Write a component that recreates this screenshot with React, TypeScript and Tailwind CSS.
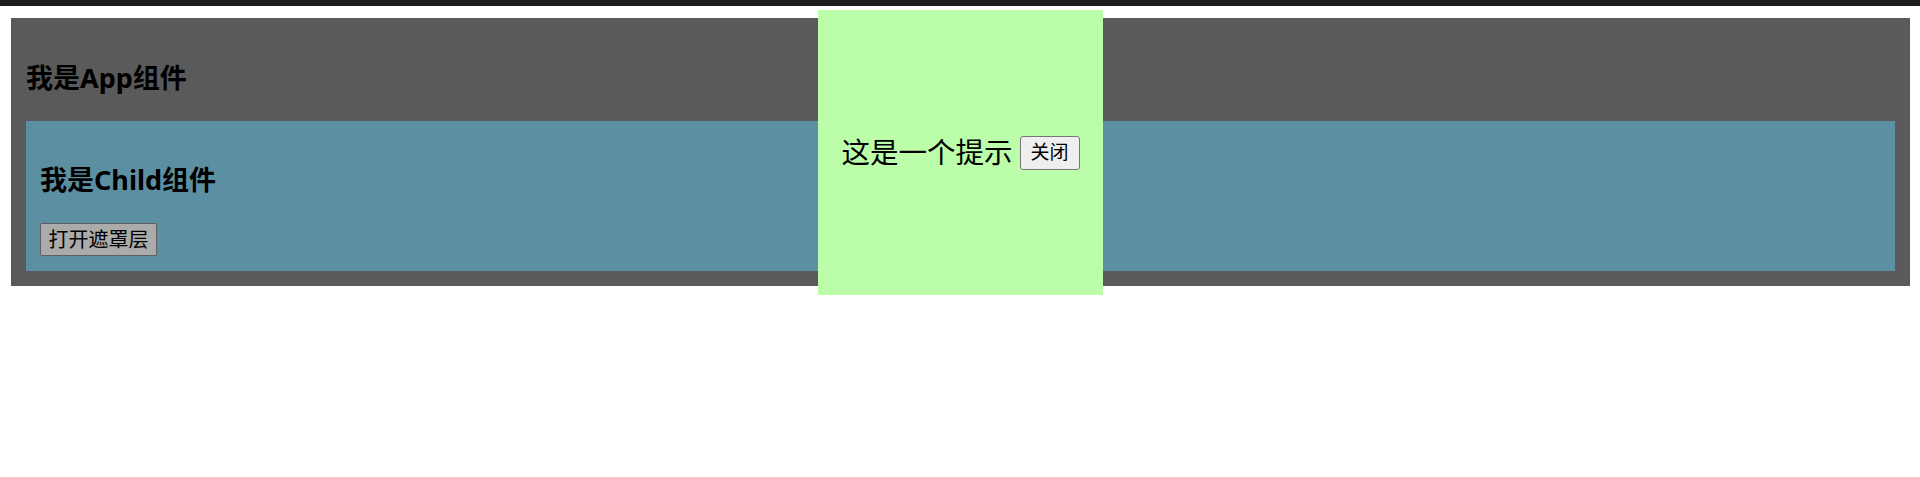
const font = "font-['Noto_Sans','Noto_Sans_CJK_SC',sans-serif]"

const Child = () => {
  return (
    <div className="bg-[#5d8fa3] px-[14px] pt-[14px] pb-[15px]">
      <h2 className="mt-[24px] mb-[22px] text-[27px] font-bold leading-[42px] text-black">
        我是Child组件
      </h2>
      <button className="flex h-[33px] w-[117px] items-center justify-center rounded-[2px] border border-[#5f5f5f] bg-[#ababab] text-[20px] leading-none text-black">
        打开遮罩层
      </button>
    </div>
  )
}

const Modal = () => {
  return (
    <div className="absolute left-[818px] top-[10px] flex h-[285px] w-[285px] items-center justify-center bg-[#bbfda8]">
      <span className="text-[28.5px] leading-none text-black">这是一个提示</span>
      <button className="ml-[7px] flex h-[34px] w-[60px] items-center justify-center rounded-[3px] border border-[#767676] bg-[#efefef] text-[19px] leading-none text-black">
        关闭
      </button>
    </div>
  )
}

export default function App() {
  return (
    <div className={`relative h-[477px] w-[1920px] bg-white ${font}`}>
      <div className="h-[6px] bg-[#1e1e1e]" />
      <div className="ml-[11px] mr-[10px] mt-[12px] bg-[#5a5a5a] p-[15px]">
        <h2 className="mt-[24px] mb-[22px] text-[27px] font-bold leading-[42px] text-black">
          我是App组件
        </h2>
        <Child />
      </div>
      <Modal />
    </div>
  )
}
